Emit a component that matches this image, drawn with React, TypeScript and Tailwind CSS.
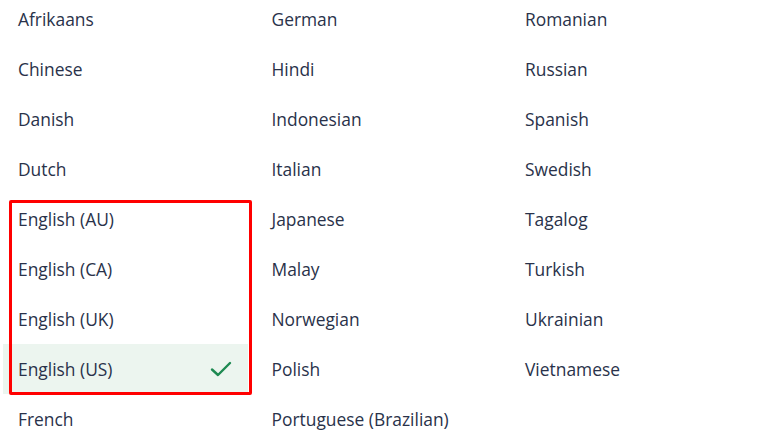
const columns = [
  ["Afrikaans", "Chinese", "Danish", "Dutch", "English (AU)", "English (CA)", "English (UK)", "English (US)", "French"],
  ["German", "Hindi", "Indonesian", "Italian", "Japanese", "Malay", "Norwegian", "Polish", "Portuguese (Brazilian)"],
  ["Romanian", "Russian", "Spanish", "Swedish", "Tagalog", "Turkish", "Ukrainian", "Vietnamese"],
];

const selected = "English (US)";

function Check() {
  return (
    <svg width="22" height="16" viewBox="0 0 22 16" fill="none">
      <path d="M2 8.5 L8 14 L20 2" stroke="#1e8a52" strokeWidth="2.4" strokeLinecap="round" strokeLinejoin="round" />
    </svg>
  );
}

export default function App() {
  return (
    <div className="relative w-[761px] h-[441px] overflow-hidden bg-white font-['Open_Sans',sans-serif] text-[17.4px] text-[#29324a]">
      <div className="mt-[-6px] ml-[3px] flex gap-[8.5px]">
        {columns.map((col, i) => (
          <ul key={i} className="flex flex-col w-[245px]">
            {col.map((name) => (
              <li
                key={name}
                className={
                  "h-[50px] flex items-center justify-between pl-[15px] pr-[16px] " +
                  (name === selected ? "bg-[#ecf5ef]" : "")
                }
              >
                <span>{name}</span>
                {name === selected && <Check />}
              </li>
            ))}
          </ul>
        ))}
      </div>
      <div className="absolute left-[9px] top-[200px] w-[243px] h-[195px] border-[3px] border-[#ff0000] rounded-[2px]" />
    </div>
  );
}
